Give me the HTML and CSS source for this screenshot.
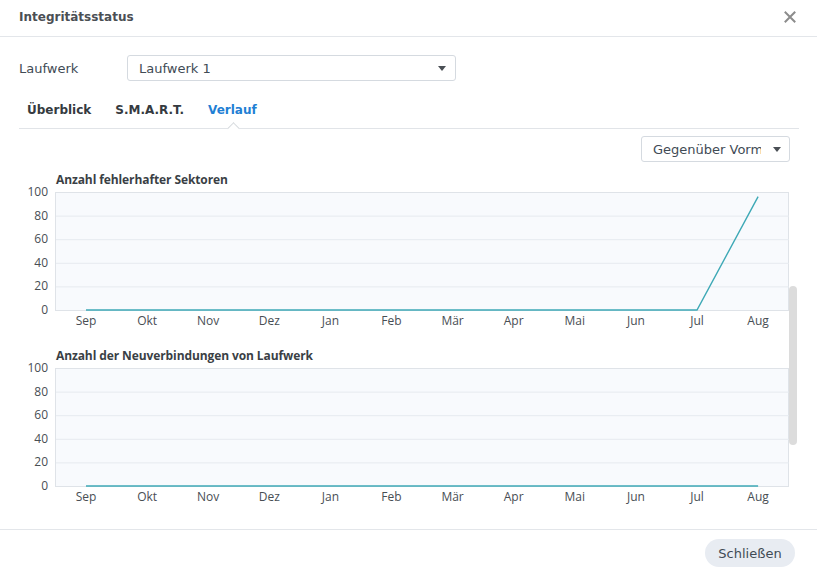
FILE: index.html
```html
<!DOCTYPE html>
<html lang="de">
<head>
<meta charset="utf-8">
<title>Integritätsstatus</title>
<link rel="stylesheet" href="styles.css">
</head>
<body>
<div class="dialog">
  <header class="header">
    <span class="title">Integritätsstatus</span>
    <svg class="close" width="12" height="12" viewBox="0 0 12 12"><path d="M1.5 1.5 L10.5 10.5 M10.5 1.5 L1.5 10.5" stroke="#8c8c8c" stroke-width="2" stroke-linecap="square"/></svg>
  </header>
  <div class="body">
    <div class="form-row">
      <label class="label">Laufwerk</label>
      <div class="select">
        <span>Laufwerk 1</span>
        <span class="caret"></span>
      </div>
    </div>
    <nav class="tabs">
      <span class="tab">Überblick</span>
      <span class="tab">S.M.A.R.T.</span>
      <span class="tab active">Verlauf</span>
    </nav>
    <div class="scroll">
      <div class="toolbar">
        <div class="select small">
          <span class="clip">Gegenüber Vormonat</span>
          <span class="caret"></span>
        </div>
      </div>

      <section class="chart">
        <div class="chart-title">Anzahl fehlerhafter Sektoren</div>
        <svg class="plot" width="771" height="143" viewBox="0 0 771 143">
          <rect x="36.5" y="5.5" width="733" height="118" fill="#f8fafd" stroke="#dfe3e8"/>
          <g stroke="#e6eaef">
            <line x1="37" x2="770" y1="29.1" y2="29.1"/>
            <line x1="37" x2="770" y1="52.7" y2="52.7"/>
            <line x1="37" x2="770" y1="76.3" y2="76.3"/>
            <line x1="37" x2="770" y1="99.9" y2="99.9"/>
          </g>
          <g class="ylab" text-anchor="end">
            <text x="29" y="9">100</text>
            <text x="29" y="32.6">80</text>
            <text x="29" y="56.2">60</text>
            <text x="29" y="79.8">40</text>
            <text x="29" y="103.4">20</text>
            <text x="29" y="127">0</text>
          </g>
          <g class="xlab" text-anchor="middle">
            <text x="67" y="138">Sep</text>
            <text x="128.1" y="138">Okt</text>
            <text x="189.2" y="138">Nov</text>
            <text x="250.3" y="138">Dez</text>
            <text x="311.4" y="138">Jan</text>
            <text x="372.5" y="138">Feb</text>
            <text x="433.6" y="138">Mär</text>
            <text x="494.7" y="138">Apr</text>
            <text x="555.8" y="138">Mai</text>
            <text x="616.9" y="138">Jun</text>
            <text x="678" y="138">Jul</text>
            <text x="739.1" y="138">Aug</text>
          </g>
          <polyline points="67,123 678,123 739.1,9.7" fill="none" stroke="#3ea9b6" stroke-width="1.4"/>
        </svg>
      </section>

      <section class="chart">
        <div class="chart-title">Anzahl der Neuverbindungen von Laufwerk</div>
        <svg class="plot" width="771" height="143" viewBox="0 0 771 143">
          <rect x="36.5" y="5.5" width="733" height="118" fill="#f8fafd" stroke="#dfe3e8"/>
          <g stroke="#e6eaef">
            <line x1="37" x2="770" y1="29.1" y2="29.1"/>
            <line x1="37" x2="770" y1="52.7" y2="52.7"/>
            <line x1="37" x2="770" y1="76.3" y2="76.3"/>
            <line x1="37" x2="770" y1="99.9" y2="99.9"/>
          </g>
          <g class="ylab" text-anchor="end">
            <text x="29" y="9">100</text>
            <text x="29" y="32.6">80</text>
            <text x="29" y="56.2">60</text>
            <text x="29" y="79.8">40</text>
            <text x="29" y="103.4">20</text>
            <text x="29" y="127">0</text>
          </g>
          <g class="xlab" text-anchor="middle">
            <text x="67" y="138">Sep</text>
            <text x="128.1" y="138">Okt</text>
            <text x="189.2" y="138">Nov</text>
            <text x="250.3" y="138">Dez</text>
            <text x="311.4" y="138">Jan</text>
            <text x="372.5" y="138">Feb</text>
            <text x="433.6" y="138">Mär</text>
            <text x="494.7" y="138">Apr</text>
            <text x="555.8" y="138">Mai</text>
            <text x="616.9" y="138">Jun</text>
            <text x="678" y="138">Jul</text>
            <text x="739.1" y="138">Aug</text>
          </g>
          <polyline points="67,123 739.1,123" fill="none" stroke="#3ea9b6" stroke-width="1.4"/>
        </svg>
      </section>

      <div class="scrollbar"></div>
    </div>
  </div>
  <footer class="footer">
    <button class="btn">Schließen</button>
  </footer>
</div>
</body>
</html>
```

FILE: styles.css
```css
html, body {
  margin: 0;
  padding: 0;
  background: #fff;
}
body {
  width: 817px;
  height: 576px;
  overflow: hidden;
  font-family: "DejaVu Sans", Verdana, sans-serif;
  font-size: 13px;
  color: #414b55;
}
.dialog {
  display: flex;
  flex-direction: column;
  height: 576px;
}
.header {
  height: 37px;
  box-sizing: border-box;
  border-bottom: 1px solid #e3e6ea;
  display: flex;
  align-items: center;
  justify-content: space-between;
  padding: 0 21px 2px 19px;
}
.title {
  font-weight: bold;
  font-size: 12px;
  color: #4b4f54;
}
.body {
  padding: 0 18px 0 19px;
  flex: 1;
  display: flex;
  flex-direction: column;
}
.form-row {
  display: flex;
  align-items: center;
  margin-top: 18px;
}
.label {
  width: 108px;
  color: #414b55;
}
.select {
  width: 329px;
  height: 26px;
  box-sizing: border-box;
  border: 1px solid #d5dae0;
  border-radius: 3px;
  display: flex;
  align-items: center;
  justify-content: space-between;
  padding: 0 9px 0 11px;
  color: #414b55;
}
.caret {
  width: 0;
  height: 0;
  border-left: 4.5px solid transparent;
  border-right: 4.5px solid transparent;
  border-top: 5px solid #4a4f55;
}
.tabs {
  display: flex;
  gap: 24px;
  padding-left: 8px;
  height: 48px;
  box-sizing: border-box;
  border-bottom: 1px solid #e1e4e8;
  align-items: center;
  padding-top: 10px;
}
.tab {
  font-weight: bold;
  font-size: 12px;
  color: #353a40;
  position: relative;
}
.tab.active {
  color: #1f7fd4;
}
.tab.active::after {
  content: "";
  position: absolute;
  left: 50%;
  bottom: -16px;
  width: 8px;
  height: 8px;
  margin-left: -3px;
  background: #fff;
  border-top: 1px solid #d6dade;
  border-left: 1px solid #d6dade;
  transform: rotate(45deg);
}
.scroll {
  position: relative;
  height: 400px;
  overflow: hidden;
  padding-right: 9px;
}
.toolbar {
  display: flex;
  justify-content: flex-end;
  padding-top: 7px;
}
.select.small {
  width: 149px;
  padding: 0 8px 0 11px;
}
.clip {
  width: 108px;
  overflow: hidden;
  white-space: nowrap;
}
.chart {
  margin-top: 11px;
}
.chart + .chart {
  margin-top: 19px;
}
.chart-title {
  font-family: "Open Sans", "Noto Sans", sans-serif;
  font-weight: 700;
  font-size: 12px;
  line-height: 14px;
  height: 14px;
  color: #3a3f45;
  padding-left: 37px;
  letter-spacing: -0.1px;
}
.plot {
  display: block;
  overflow: visible;
}
.ylab, .xlab {
  font-family: "Open Sans", "Noto Sans", sans-serif;
  font-size: 12px;
  fill: #484e54;
}
.scrollbar {
  position: absolute;
  right: 2px;
  top: 157px;
  width: 8px;
  height: 159px;
  border-radius: 4px;
  background: #dcdcdc;
}
.footer {
  height: 46px;
  border-top: 1px solid #e3e6ea;
  display: flex;
  align-items: center;
  justify-content: flex-end;
  padding-right: 22px;
}
.btn {
  width: 90px;
  height: 28px;
  border: none;
  border-radius: 14px;
  background: #e8ecf2;
  font-family: "DejaVu Sans", Verdana, sans-serif;
  font-size: 13px;
  color: #414b55;
  padding: 0;
}
```
